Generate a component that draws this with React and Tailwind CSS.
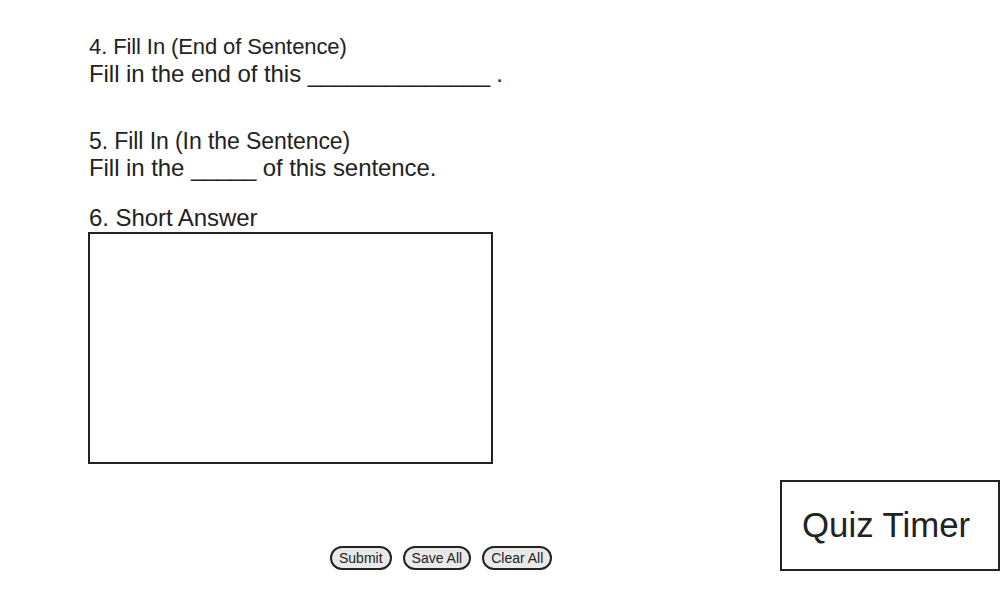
import React from "react";

export default function App() {
  return (
    <div className="w-[1000px] h-[600px] bg-white text-[#222] overflow-hidden" style={{ fontFamily: '"Liberation Sans", Arial, sans-serif' }}>
      <div className="pl-[89px] pt-[34px]">
        <div className="text-[22px] leading-[26px] tracking-[-0.1px]">4. Fill In (End of Sentence)</div>
        <div className="text-[24px] leading-[28px] tracking-[-0.06px]">
          Fill in the end of this <span className="tracking-[-0.35px]">______________</span> .
        </div>
        <div className="h-[40px]" />
        <div className="text-[23px] leading-[26px] tracking-[-0.08px]">5. Fill In (In the Sentence)</div>
        <div className="text-[24px] leading-[28px] tracking-[-0.06px]">
          Fill in the <span className="tracking-[-0.33px]">_____</span> of this sentence.
        </div>
        <div className="h-[22px]" />
        <div className="text-[24px] leading-[28px] tracking-[-0.06px]">6. Short Answer</div>
        <textarea className="block -ml-px w-[405px] h-[232px] border-2 border-[#222] resize-none outline-none" />
      </div>
      <div className="flex items-end mt-[16px]">
        <div className="flex gap-[11px] pl-[330px] pb-[1px]">
          <button className="h-[24px] px-[7px] rounded-full border-2 border-[#222] bg-[#e9e9e9] text-[14px] leading-none">Submit</button>
          <button className="h-[24px] px-[7px] rounded-full border-2 border-[#222] bg-[#e9e9e9] text-[14px] leading-none">Save All</button>
          <button className="h-[24px] px-[7px] rounded-full border-2 border-[#222] bg-[#e9e9e9] text-[14px] leading-none">Clear All</button>
        </div>
        <div className="ml-auto w-[220px] h-[91px] border-2 border-[#222] flex items-center pl-[20px] text-[34.8px]">
          Quiz Timer
        </div>
      </div>
    </div>
  );
}
